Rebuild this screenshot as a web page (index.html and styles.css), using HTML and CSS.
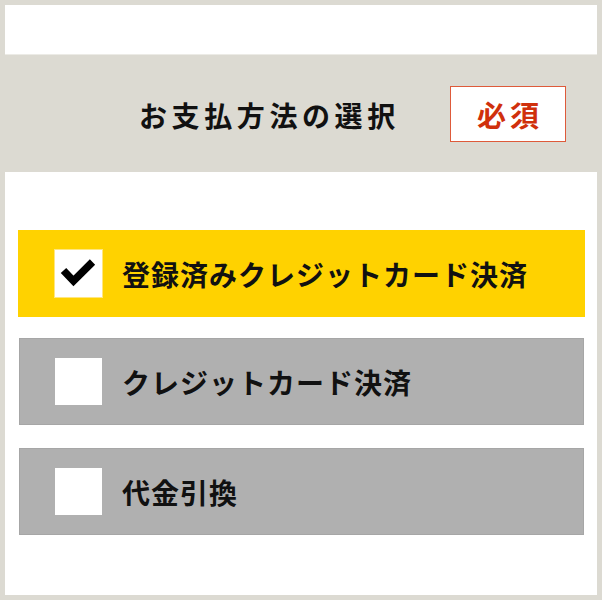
FILE: index.html
```html
<!DOCTYPE html>
<html lang="ja">
<head>
<meta charset="utf-8">
<title>お支払方法の選択</title>
<link rel="stylesheet" href="styles.css">
</head>
<body>
<div class="top"></div>
<div class="header">
  <h1 class="title">お支払方法の選択</h1>
  <span class="badge">必須</span>
</div>
<div class="panel">
  <div class="option option-selected">
    <span class="check">
      <svg width="47" height="47" viewBox="0 0 47 47"><polyline points="8.5,20.5 18.5,31 37.5,12" fill="none" stroke="#000" stroke-width="7.5" stroke-linecap="butt" stroke-linejoin="miter"/></svg>
    </span>
    <span class="label">登録済みクレジットカード決済</span>
  </div>
  <div class="option">
    <span class="check"></span>
    <span class="label">クレジットカード決済</span>
  </div>
  <div class="option option-last">
    <span class="check"></span>
    <span class="label">代金引換</span>
  </div>
</div>
</body>
</html>
```
FILE: styles.css
```css
html, body {
  margin: 0;
  padding: 0;
}
body {
  background: #dcdad2;
  width: 602px;
  height: 600px;
  overflow: hidden;
  font-family: "Noto Sans CJK JP", "Noto Sans", sans-serif;
  color: #111;
}
.top {
  margin: 5px 5px 0;
  height: 50px;
  background: #fff;
  border-bottom: 1px solid #ecebe6;
  box-sizing: border-box;
}
.header {
  height: 117px;
  display: flex;
  align-items: center;
  justify-content: space-between;
  padding: 0 36px 0 139px;
  box-sizing: border-box;
}
.title {
  margin: 0;
  font-size: 28px;
  font-weight: 700;
  letter-spacing: 4.6px;
  line-height: 1;
  padding-top: 2px;
}
.badge {
  width: 116px;
  height: 56px;
  box-sizing: border-box;
  border: 1px solid #de5a3a;
  background: #fff;
  color: #d0300c;
  font-size: 29px;
  font-weight: 700;
  letter-spacing: 4px;
  display: flex;
  align-items: center;
  justify-content: center;
  padding-left: 4px;
}
.panel {
  margin: 0 5px;
  height: 423px;
  background: #fff;
  padding: 58px 12px 0 13px;
  box-sizing: border-box;
  display: flex;
  flex-direction: column;
  gap: 21px;
}
.option {
  height: 87px;
  box-sizing: border-box;
  display: flex;
  align-items: center;
  background: #b0b0b0;
  border: 1px solid #a6a6a6;
  margin: 0 1px;
  padding-left: 35px;
}
.option-last {
  margin-top: 2px;
}
.option-selected {
  background: #ffd200;
  border: none;
  margin: 0;
  padding-left: 37px;
}
.check {
  width: 47px;
  height: 47px;
  background: #fff;
  flex: none;
  display: block;
}
.option-selected .check {
  box-shadow: 0 0 0 1px #ffe680;
}
.check svg {
  display: block;
}
.label {
  margin-left: 20px;
  font-size: 28px;
  font-weight: 700;
  letter-spacing: 1px;
  line-height: 1;
}
```
